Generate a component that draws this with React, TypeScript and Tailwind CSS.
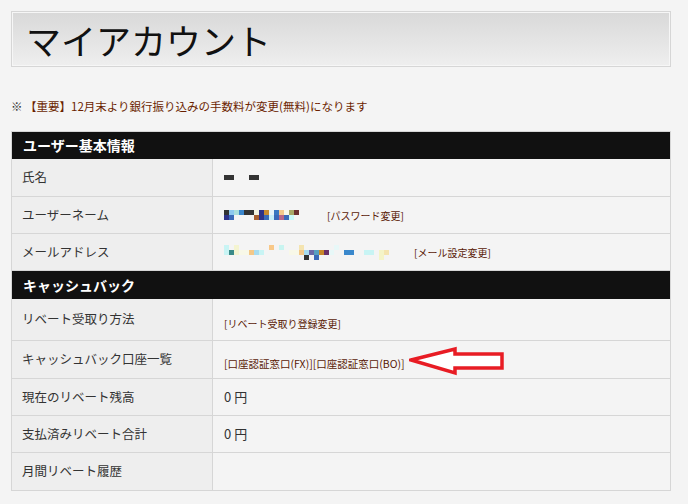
import React from 'react';

type Cell = [number, number, string];

// pixelated (mosaic) placeholder for hidden account data
const Mosaic = ({ cells, w, h }: { cells: Cell[]; w: number; h: number }) => (
  <svg width={w} height={h} viewBox={`0 0 ${w} ${h}`} className="block shrink-0">
    {cells.map(([x, y, c], i) => (
      <rect key={i} x={x} y={y} width={5} height={5} fill={c} />
    ))}
  </svg>
);

const userCells: Cell[] = [
  [0, 0, '#333333'], [5, 0, '#8cc8ef'], [10, 0, '#a8dedc'], [15, 0, '#3a86cc'], [20, 0, '#333333'], [25, 0, '#333333'],
  [30, 0, '#f2f2e0'], [35, 0, '#2e3288'], [40, 0, '#c88a30'], [45, 0, '#e8f4f8'], [50, 0, '#3a78c0'], [55, 0, '#f4c88a'],
  [60, 0, '#f8f8e8'], [65, 0, '#a8a868'], [70, 0, '#6a3030'],
  [0, 5, '#2e3288'], [5, 5, '#3a6ab8'], [30, 5, '#a86030'], [35, 5, '#2e3288'], [40, 5, '#3a6ab8'], [45, 5, '#c8f0f8'],
  [50, 5, '#3a6ab8'], [55, 5, '#b86888'], [60, 5, '#3a6ab8'], [65, 5, '#c8f8f8'],
];

const mailCells: Cell[] = [
  [0, 0, '#c8f4f4'], [10, 0, '#f4f4d0'], [45, 0, '#f8c888'], [55, 0, '#c8f4f0'], [75, 0, '#f4e4b0'], [110, 0, '#e8f8f8'],
  [0, 5, '#c8f4f4'], [5, 5, '#3a8a88'], [10, 5, '#f4f4d0'], [15, 5, '#f8f8e8'], [20, 5, '#f8f8e8'], [25, 5, '#f4c888'],
  [30, 5, '#a8dcf0'], [35, 5, '#c8f4f4'], [65, 5, '#f8f8e8'], [70, 5, '#f8f8e8'], [75, 5, '#f4c888'], [80, 5, '#a8dcf0'],
  [85, 5, '#6a68a8'], [90, 5, '#58a0c0'], [95, 5, '#c8882a'], [100, 5, '#6a3068'], [105, 5, '#e8f8f8'],
  [120, 5, '#3a88cc'], [125, 5, '#3a88cc'], [140, 5, '#c8f4f4'], [145, 5, '#c8f4f4'], [155, 5, '#f4f4c8'], [160, 5, '#f4e4b0'],
  [80, 10, '#333333'], [90, 10, '#3a6ab8'], [155, 10, '#f4f4c8'],
];

const Link = ({ children }: { children: React.ReactNode }) => (
  <span className="text-[10px] text-[#5a1a06] whitespace-nowrap">[{children}]</span>
);

const Header = ({ title, h }: { title: string; h: string }) => (
  <div className={`flex items-center bg-[#111111] pl-[11px] text-[14px] font-bold text-white ${h}`}>{title}</div>
);

const Row = ({
  label,
  children,
  h = 'h-[37px]',
  vpad = '',
  last = false,
}: {
  label: string;
  children?: React.ReactNode;
  h?: string;
  vpad?: string;
  last?: boolean;
}) => (
  <div className={`flex ${h} ${last ? '' : 'border-b border-[#d6d6d6]'}`}>
    <div className="flex w-[201px] shrink-0 items-center border-r border-[#d6d6d6] bg-[#eeeeee] pl-[10px] text-[12.5px] text-[#333333]">
      {label}
    </div>
    <div className={`flex flex-1 items-center pl-[11px] text-[13px] text-[#333333] ${vpad}`}>{children}</div>
  </div>
);

export default function App() {
  return (
    <div
      className="min-h-[504px] w-[688px] bg-[#f4f4f4] pl-[11px] pt-[11px]"
      style={{ fontFamily: '"Noto Sans CJK JP", "Noto Sans", sans-serif' }}
    >
      <div className="w-[660px] border border-[#d6d6d6] bg-[#f6f6f6] p-px">
        <div className="flex h-[52px] items-center bg-gradient-to-b from-[#d9d9d9] to-[#eeeeee] pl-[13px] text-[35px] leading-none text-[#111111]">
          マイアカウント
        </div>
      </div>

      <p className="mt-[31px] text-[11.5px] leading-[16px] text-[#6b1f00]">
        <span className="text-[#333333]">※</span> 【重要】12月末より銀行振り込みの手数料が変更(無料)になります
      </p>

      <div className="mt-[17px] w-[660px] border border-[#d6d6d6]">
        <Header title="ユーザー基本情報" h="h-[27px]" />
        <Row label="氏名" h="h-[38px]">
          <span className="inline-block h-[5px] w-[10px] bg-[#333333]" />
          <span className="ml-[15px] inline-block h-[5px] w-[10px] bg-[#333333]" />
        </Row>
        <Row label="ユーザーネーム">
          <Mosaic cells={userCells} w={75} h={10} />
          <span className="ml-[28px]">
            <Link>パスワード変更</Link>
          </span>
        </Row>
        <Row label="メールアドレス">
          <Mosaic cells={mailCells} w={166} h={15} />
          <span className="ml-[24px]">
            <Link>メール設定変更</Link>
          </span>
        </Row>
        <Header title="キャッシュバック" h="h-[28px]" />
        <Row label="リベート受取り方法" h="h-[42px]" vpad="pt-[8px]">
          <Link>リベート受取り登録変更</Link>
        </Row>
        <Row label="キャッシュバック口座一覧" h="h-[38px]" vpad="pt-[8px]">
          <span className="text-[10.5px] text-[#5a1a06] whitespace-nowrap">[口座認証窓口(FX)][口座認証窓口(BO)]</span>
          <svg width="96" height="30" viewBox="0 0 96 30" className="ml-[4px] -mt-[6px] shrink-0">
            <polygon
              points="2,14 46,3 46,8 93,8 93,22 46,22 46,27"
              fill="#ffffff"
              stroke="#e81c24"
              strokeWidth="3.5"
              strokeLinejoin="miter"
            />
          </svg>
        </Row>
        <Row label="現在のリベート残高">0 円</Row>
        <Row label="支払済みリベート合計">0 円</Row>
        <Row label="月間リベート履歴" last />
      </div>
    </div>
  );
}
